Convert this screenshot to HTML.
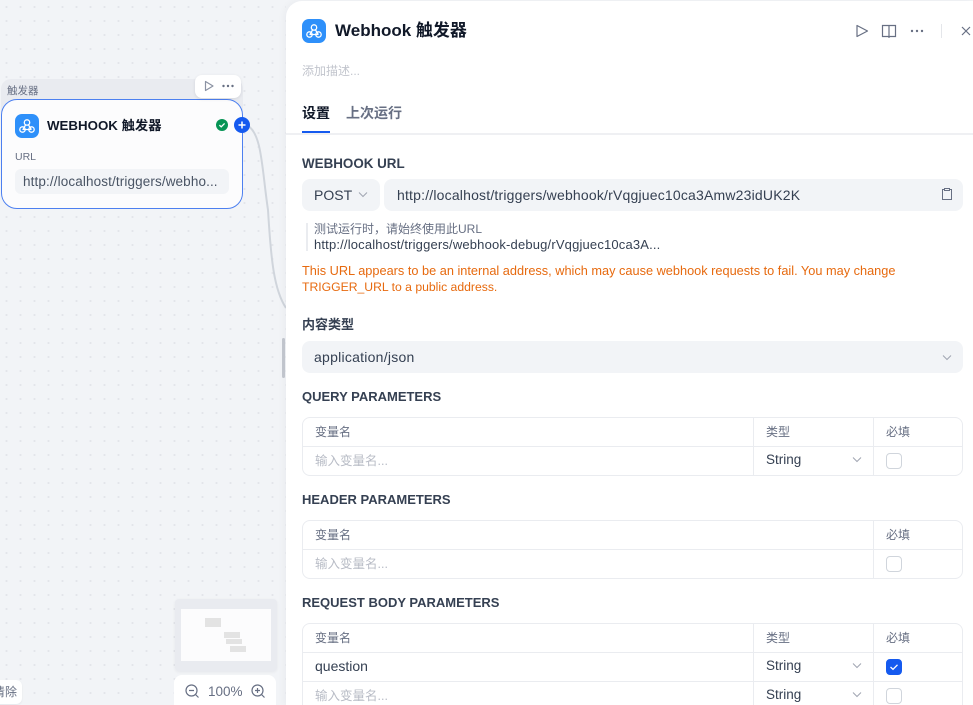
<!DOCTYPE html>
<html lang="zh"><head><meta charset="utf-8"><style>
*{box-sizing:border-box}
html,body{margin:0;padding:0;width:973px;height:705px;overflow:hidden}
body{background:#f2f4f7;font-family:"Liberation Sans","Noto Sans CJK SC",sans-serif;color:#354052}
#root{position:absolute;left:0;top:0;width:973px;height:705px;overflow:hidden;background:#f2f4f7}
.a{position:absolute;white-space:nowrap}
#bg{position:absolute;left:0;top:0;width:286px;height:705px;background-image:radial-gradient(circle,#e3e5ea 1px,transparent 1.2px);background-size:14px 14px;background-position:-0.5px 0}
.panel{position:absolute;left:286px;top:1px;width:687px;height:704px;background:#fff;border-radius:16px 0 0 0;box-shadow:-2px 0 8px rgba(16,24,40,.04)}
.h{font-size:13px;font-weight:700;color:#354052;line-height:18px}
.inp{background:#f2f4f7;border-radius:8px;height:32px;font-size:14px;line-height:32px;color:#354052}
.tbl{position:absolute;left:302px;width:661px;border:1px solid #eaecf0;border-radius:8px;background:#fff}
.row{position:absolute;left:0;right:0;height:1px;background:#eaecf0}
.col{position:absolute;top:0;bottom:0;width:1px;background:#eaecf0}
.th{font-size:12px;color:#676f83;line-height:16px}
.ph{font-size:12.5px;color:#b8bcc6;line-height:16px}
.td{font-size:13.5px;color:#354052;line-height:16px}
.cb{position:absolute;width:16px;height:16px;border:1px solid #d0d5dc;border-radius:4px;background:#fff}
</style></head><body><div id="root">
<div id="bg"></div>

<!-- connecting edge -->
<svg class="a" style="left:240px;top:120px" width="50" height="200" fill="none"><path d="M8 6C22 14 22 50 28 90C31 140 34 170 46 188" stroke="#d0d5dc" stroke-width="2"/></svg>

<!-- Node group -->
<div class="a" style="left:1px;top:79px;width:242px;height:40px;background:#e9ebf0;border-radius:10px 10px 0 0"></div>
<div class="a" style="left:7px;top:84px;font-size:10.5px;line-height:14px;color:#676f83">触发器</div>
<div class="a" style="left:1px;top:99px;width:242px;height:110px;background:#fcfcfd;border:1px solid #4d80f0;border-radius:16px"></div>
<div class="a" style="left:195px;top:75px;width:46px;height:23px;background:#fff;border-radius:7px;box-shadow:0 1px 3px rgba(16,24,40,.1)"></div>
<svg class="a" style="left:203px;top:80px" width="12" height="12" fill="none"><path d="M2.5 1.5L10 6L2.5 10.5Z" stroke="#8b92a3" stroke-width="1.2" stroke-linejoin="round"/></svg>
<svg class="a" style="left:221px;top:83px" width="14" height="6" fill="#676f83"><circle cx="2.5" cy="3" r="1.2"/><circle cx="7" cy="3" r="1.2"/><circle cx="11.5" cy="3" r="1.2"/></svg>

<!-- node icon -->
<div class="a" style="left:15px;top:114px;width:24px;height:24px;background:#2e90fa;border-radius:7px"></div>
<svg class="a" style="left:15px;top:114px" width="24" height="24" fill="none" stroke="#fff" stroke-width="1.3" stroke-linejoin="round" stroke-linecap="round"><circle cx="12" cy="8.5" r="2.7"/><circle cx="7.5" cy="15.5" r="2.7"/><circle cx="16.5" cy="15.5" r="2.7"/><path d="M10.6 10.8L8.2 15.2M13.4 10.8L16 15M8 15.5H16"/></svg>
<div class="a" style="left:47px;top:117px;font-size:13.3px;font-weight:700;line-height:18px;color:#101828">WEBHOOK 触发器</div>
<svg class="a" style="left:216px;top:119px" width="12" height="12" fill="none"><circle cx="6" cy="6" r="6" fill="#079455"/><path d="M3.4 6.1L5.2 7.8L8.6 4.4" stroke="#fff" stroke-width="1.3"/></svg>
<svg class="a" style="left:234px;top:117px" width="16" height="16" fill="none"><circle cx="8" cy="8" r="8" fill="#155aef"/><path d="M8 4.5V11.5M4.5 8H11.5" stroke="#fff" stroke-width="1.5"/></svg>
<div class="a" style="left:15px;top:150px;font-size:10.5px;line-height:14px;color:#676f83">URL</div>
<div class="a" style="left:15px;top:169px;width:214px;height:25px;background:#f2f4f7;border-radius:6px;padding-left:8px;font-size:13.5px;letter-spacing:.12px;line-height:25px;color:#495464">http://localhost/triggers/webho...</div>

<!-- left bottom -->
<div class="a" style="left:-10px;top:680px;width:32px;height:24px;background:#fff;border-radius:6px;box-shadow:0 1px 2px rgba(16,24,40,.06)"></div>
<div class="a" style="left:-13px;top:684px;width:30px;font-size:12px;line-height:16px;color:#676f83;text-align:right">清除</div>
<div class="a" style="left:175px;top:599px;width:102px;height:72px;background:#e9ebf0;border-radius:4px;box-shadow:0 1px 3px rgba(16,24,40,.06)"></div>
<div class="a" style="left:181px;top:609px;width:90px;height:52px;background:#fcfcfd"></div>
<div class="a" style="left:205px;top:618px;width:16px;height:9px;background:#e3e3e3"></div>
<div class="a" style="left:224px;top:632px;width:16px;height:6px;background:#e3e3e3"></div>
<div class="a" style="left:226px;top:639px;width:16px;height:5px;background:#e3e3e3"></div>
<div class="a" style="left:230px;top:646px;width:16px;height:6px;background:#e3e3e3"></div>
<div class="a" style="left:174px;top:675px;width:102px;height:30px;background:#fff;border-radius:8px 8px 0 0"></div>
<svg class="a" style="left:184px;top:683px" width="16" height="16" fill="none" stroke="#676f83" stroke-width="1.2"><circle cx="7.5" cy="7.5" r="5.5"/><path d="M5 7.5H10M11.5 11.5L14.5 14.5"/></svg>
<div class="a" style="left:208px;top:684px;font-size:13.5px;line-height:16px;color:#676f83">100%</div>
<svg class="a" style="left:250px;top:683px" width="16" height="16" fill="none" stroke="#676f83" stroke-width="1.2"><circle cx="7.5" cy="7.5" r="5.5"/><path d="M5 7.5H10M7.5 5V10M11.5 11.5L14.5 14.5"/></svg>

<!-- resize handle -->
<div class="a" style="left:282px;top:338px;width:3px;height:40px;background:#c4c8d0;border-radius:2px"></div>

<div class="panel"></div>

<!-- panel head -->
<div class="a" style="left:302px;top:19px;width:24px;height:24px;background:#2e90fa;border-radius:7px"></div>
<svg class="a" style="left:302px;top:19px" width="24" height="24" fill="none" stroke="#fff" stroke-width="1.3" stroke-linejoin="round" stroke-linecap="round"><circle cx="12" cy="8.5" r="2.7"/><circle cx="7.5" cy="15.5" r="2.7"/><circle cx="16.5" cy="15.5" r="2.7"/><path d="M10.6 10.8L8.2 15.2M13.4 10.8L16 15M8 15.5H16"/></svg>
<div class="a" style="left:335px;top:20px;font-size:17px;font-weight:700;line-height:22px;color:#101828">Webhook 触发器</div>
<svg class="a" style="left:855px;top:24px" width="14" height="14" fill="none"><path d="M2 1.5L12.5 7L2 12.5Z" stroke="#676f83" stroke-width="1.2" stroke-linejoin="round"/></svg>
<svg class="a" style="left:881px;top:24px" width="16" height="15" fill="none" stroke="#676f83" stroke-width="1.2"><path d="M1.5 1.5H14.5V12.5H1.5ZM8 1.5V14"/></svg>
<svg class="a" style="left:910px;top:28px" width="14" height="6" fill="#676f83"><circle cx="2" cy="3" r="1.2"/><circle cx="7" cy="3" r="1.2"/><circle cx="12" cy="3" r="1.2"/></svg>
<div class="a" style="left:941px;top:24px;width:1px;height:14px;background:#e4e6ea"></div>
<svg class="a" style="left:960px;top:25px" width="12" height="12" fill="none" stroke="#676f83" stroke-width="1.2"><path d="M2 2L10 10M10 2L2 10"/></svg>
<div class="a" style="left:302px;top:63px;font-size:12px;line-height:16px;color:#c2c5cd">添加描述...</div>

<!-- tabs -->
<div class="a" style="left:302px;top:104px;font-size:14px;font-weight:700;line-height:18px;color:#101828">设置</div>
<div class="a" style="left:346px;top:104px;font-size:14px;font-weight:700;line-height:18px;color:#676f83">上次运行</div>
<div class="a" style="left:302px;top:131px;width:28px;height:2px;background:#155aef"></div>
<div class="a" style="left:286px;top:133px;width:687px;height:2px;background:#eff0f3"></div>

<!-- webhook url -->
<div class="a h" style="left:302px;top:155px;font-size:13.4px">WEBHOOK URL</div>
<div class="a inp" style="left:302px;top:179px;width:78px;padding-left:12px">POST</div>
<svg class="a" style="left:358px;top:191px" width="10" height="8" fill="none" stroke="#a0a5b2" stroke-width="1"><path d="M1 1.5L5 5.5L9 1.5"/></svg>
<div class="a inp" style="left:384px;top:179px;width:579px;padding-left:13px;letter-spacing:.19px">http://localhost/triggers/webhook/rVqgjuec10ca3Amw23idUK2K</div>
<svg class="a" style="left:941px;top:187px" width="12" height="14" fill="none" stroke="#676f83" stroke-width="1"><path d="M3 2.5H1.5V12.5H10.5V2.5H9M3.5 1.5H8.5V3.5H3.5Z"/></svg>
<div class="a" style="left:306px;top:223px;width:2px;height:28px;background:#eaecf0"></div>
<div class="a" style="left:314px;top:222px;font-size:12px;line-height:15px;color:#676f83">测试运行时，请始终使用此URL</div>
<div class="a" style="left:314px;top:237px;font-size:13px;letter-spacing:.17px;line-height:15px;color:#354052">http://localhost/triggers/webhook-debug/rVqgjuec10ca3A...</div>
<div class="a" style="left:302px;top:263px;font-size:12.76px;line-height:16px;color:#e76a0f">This URL appears to be an internal address, which may cause webhook requests to fail. You may change</div>
<div class="a" style="left:302px;top:279px;font-size:12.2px;line-height:16px;color:#e76a0f">TRIGGER_URL to a public address.</div>

<!-- content type -->
<div class="a h" style="left:302px;top:316px">内容类型</div>
<div class="a inp" style="left:302px;top:341px;width:661px;padding-left:12px;letter-spacing:.25px">application/json</div>
<svg class="a" style="left:942px;top:354px" width="10" height="8" fill="none" stroke="#a0a5b2" stroke-width="1"><path d="M1 1.5L5 5.5L9 1.5"/></svg>

<!-- query -->
<div class="a h" style="left:302px;top:388px">QUERY PARAMETERS</div>
<div class="tbl" style="top:417px;height:59px"><div class="row" style="top:28px"></div><div class="col" style="left:450px"></div><div class="col" style="left:570px"></div></div>
<div class="a th" style="left:315px;top:424px">变量名</div>
<div class="a th" style="left:766px;top:424px">类型</div>
<div class="a th" style="left:886px;top:424px">必填</div>
<div class="a ph" style="left:315px;top:453px">输入变量名...</div>
<div class="a td" style="left:766px;top:452px">String</div>
<svg class="a" style="left:852px;top:456px" width="10" height="8" fill="none" stroke="#a0a5b2" stroke-width="1"><path d="M1 1.5L5 5.5L9 1.5"/></svg>
<div class="cb" style="left:886px;top:453px"></div>

<!-- header -->
<div class="a h" style="left:302px;top:491px">HEADER PARAMETERS</div>
<div class="tbl" style="top:520px;height:59px"><div class="row" style="top:28px"></div><div class="col" style="left:570px"></div></div>
<div class="a th" style="left:315px;top:527px">变量名</div>
<div class="a th" style="left:886px;top:527px">必填</div>
<div class="a ph" style="left:315px;top:556px">输入变量名...</div>
<div class="cb" style="left:886px;top:556px"></div>

<!-- body -->
<div class="a h" style="left:302px;top:594px">REQUEST BODY PARAMETERS</div>
<div class="tbl" style="top:623px;height:95px"><div class="row" style="top:28px"></div><div class="row" style="top:57px"></div><div class="col" style="left:450px"></div><div class="col" style="left:570px"></div></div>
<div class="a th" style="left:315px;top:630px">变量名</div>
<div class="a th" style="left:766px;top:630px">类型</div>
<div class="a th" style="left:886px;top:630px">必填</div>
<div class="a td" style="left:315px;top:658px;font-size:14px">question</div>
<div class="a td" style="left:766px;top:658px">String</div>
<svg class="a" style="left:852px;top:662px" width="10" height="8" fill="none" stroke="#a0a5b2" stroke-width="1"><path d="M1 1.5L5 5.5L9 1.5"/></svg>
<div class="cb" style="left:886px;top:659px;background:#155aef;border-color:#155aef"></div>
<svg class="a" style="left:886px;top:659px" width="16" height="16" fill="none" stroke="#fff" stroke-width="1.3"><path d="M4.5 8L7 10.3L11.5 5.8"/></svg>
<div class="a ph" style="left:315px;top:688px">输入变量名...</div>
<div class="a td" style="left:766px;top:687px">String</div>
<svg class="a" style="left:852px;top:691px" width="10" height="8" fill="none" stroke="#a0a5b2" stroke-width="1"><path d="M1 1.5L5 5.5L9 1.5"/></svg>
<div class="cb" style="left:886px;top:688px"></div>
</div></body></html>
